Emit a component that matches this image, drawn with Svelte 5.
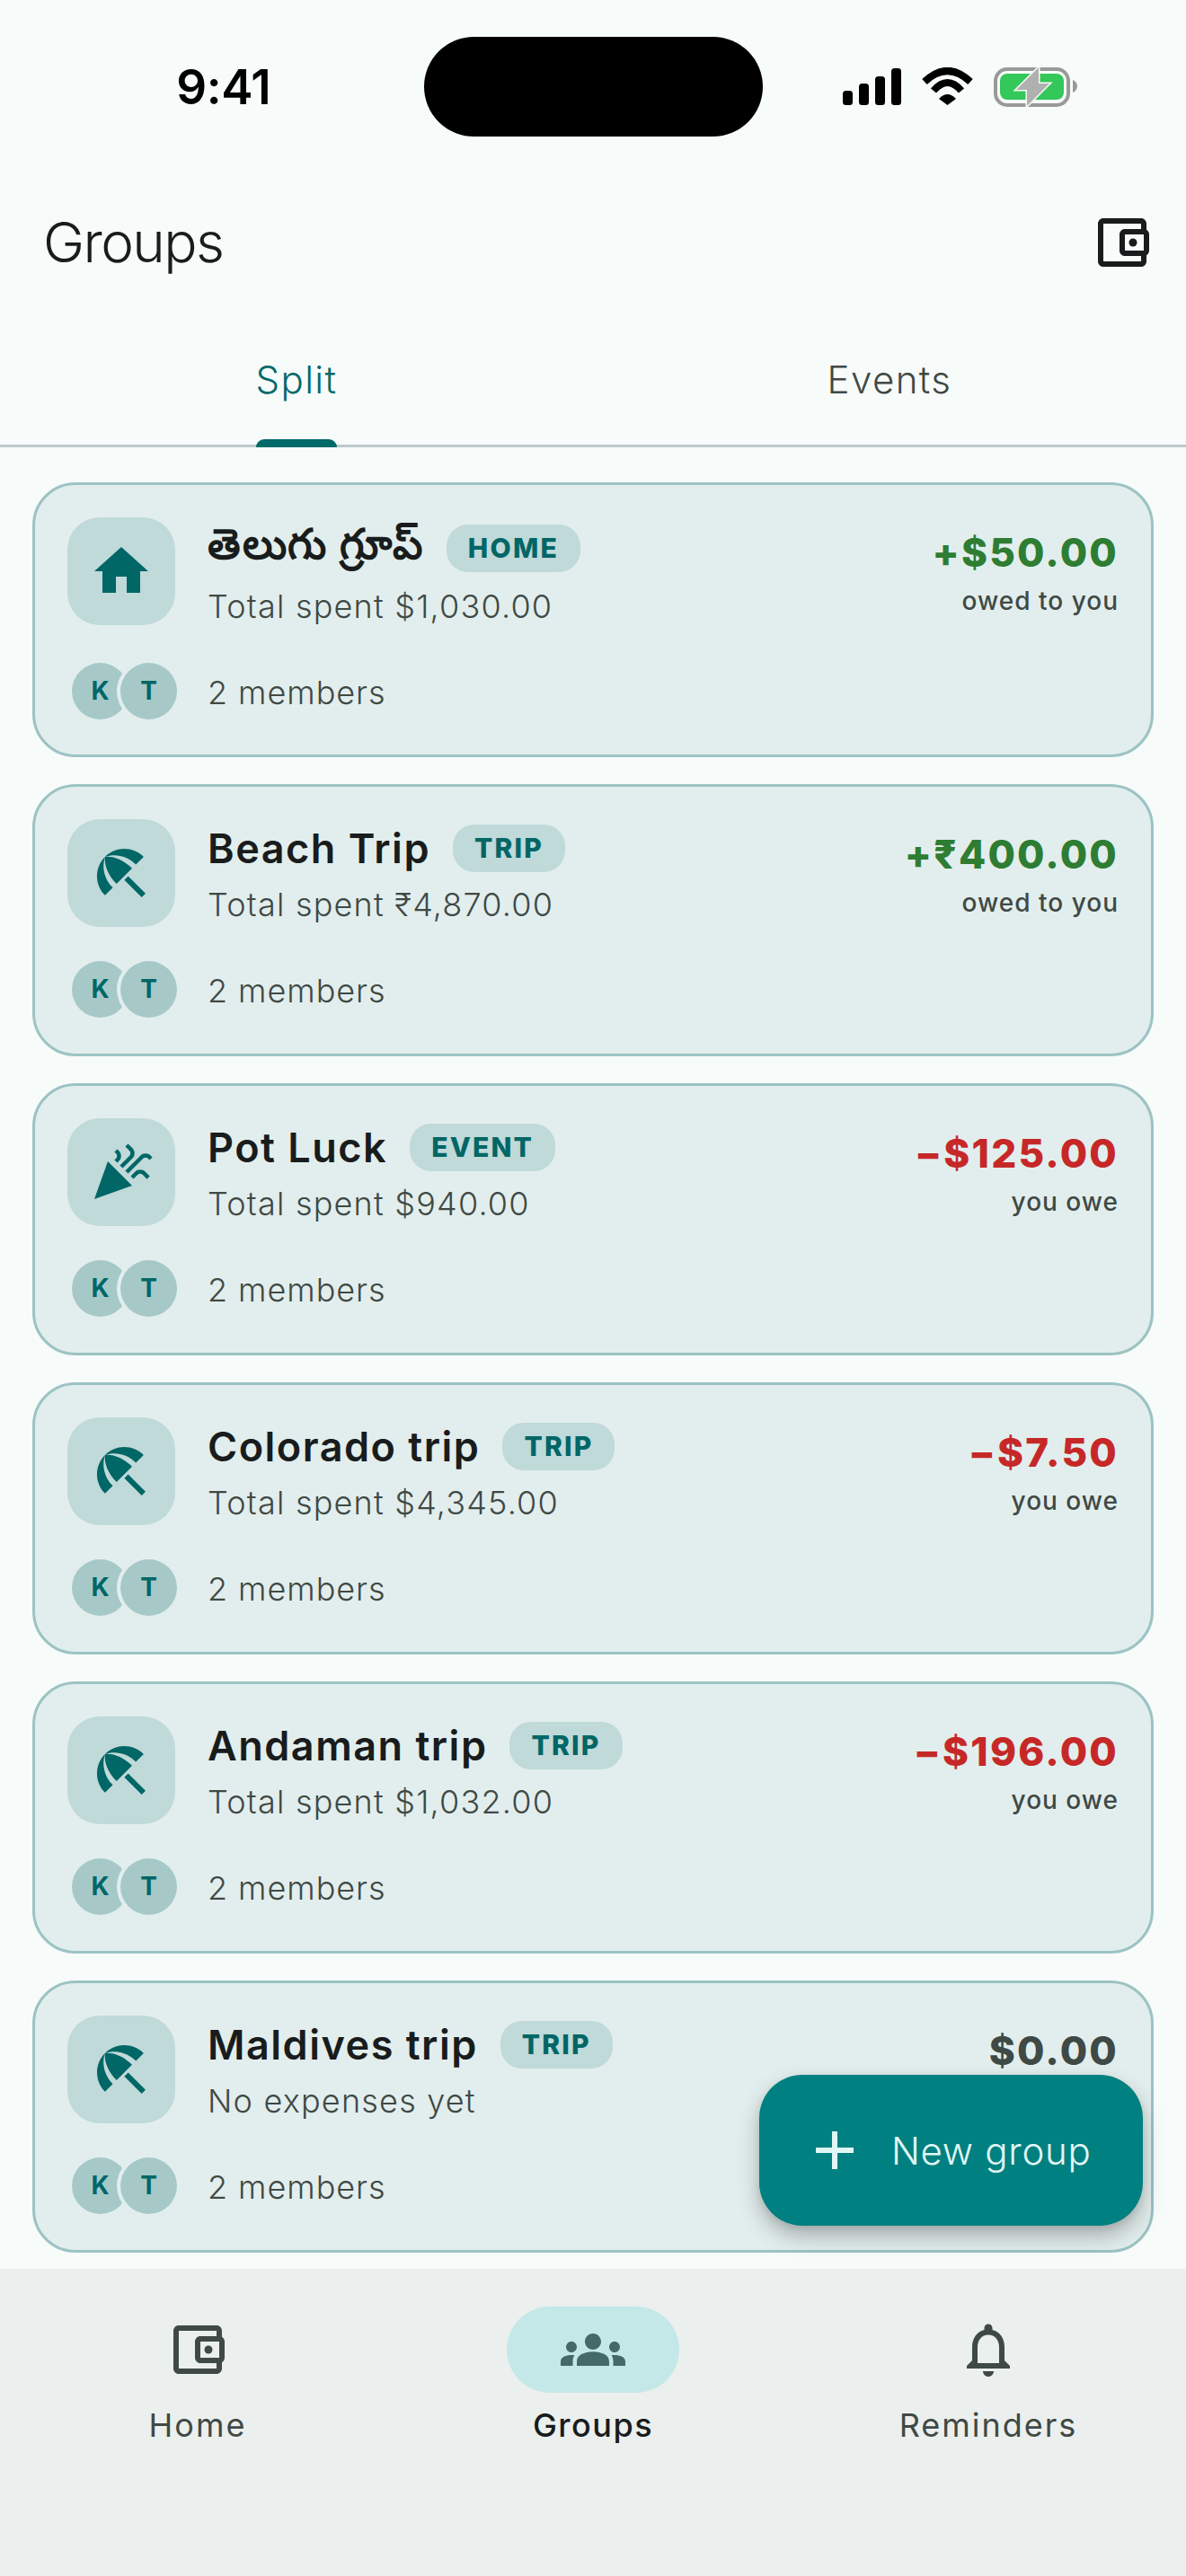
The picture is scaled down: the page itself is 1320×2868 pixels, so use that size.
<script>
	const groups = [
		{ name: 'తెలుగు గ్రూప్', tag: 'HOME', icon: 'home', spent: 'Total spent $1,030.00', amount: '+$50.00', note: 'owed to you', tone: 'pos', te: true },
		{ name: 'Beach Trip', tag: 'TRIP', icon: 'beach', spent: 'Total spent ₹4,870.00', amount: '+₹400.00', note: 'owed to you', tone: 'pos' },
		{ name: 'Pot Luck', tag: 'EVENT', icon: 'party', spent: 'Total spent $940.00', amount: '−$125.00', note: 'you owe', tone: 'neg' },
		{ name: 'Colorado trip', tag: 'TRIP', icon: 'beach', spent: 'Total spent $4,345.00', amount: '−$7.50', note: 'you owe', tone: 'neg' },
		{ name: 'Andaman trip', tag: 'TRIP', icon: 'beach', spent: 'Total spent $1,032.00', amount: '−$196.00', note: 'you owe', tone: 'neg' },
		{ name: 'Maldives trip', tag: 'TRIP', icon: 'beach', spent: 'No expenses yet', amount: '$0.00', note: '', tone: 'zero' }
	];

	const icons = {
		home: 'M10 20v-6h4v6h5v-8h3L12 3 2 12h3v8z',
		beach: 'M13.127 14.56l1.43-1.43 6.44 6.443L19.57 21zm4.293-5.73l2.86-2.86c-3.95-3.95-10.35-3.96-14.3-.02 3.93-1.3 8.31-.25 11.44 2.88zM5.95 5.98c-3.94 3.95-3.93 10.35.02 14.3l2.86-2.86C5.7 14.29 4.65 9.91 5.95 5.98zm.02-.02l-.01.01c-.38 3.01 1.17 6.88 4.3 10.02l5.73-5.73c-3.13-3.13-7.01-4.68-10.02-4.3z',
		party: 'M2 22l14-5-9-9zM14.53 12.53l5.59-5.59c.49-.49 1.28-.49 1.77 0l.59.59 1.06-1.06-.59-.59c-1.07-1.07-2.82-1.07-3.89 0l-5.59 5.59 1.06 1.06zM10.06 6.88l-.59.59 1.06 1.06.59-.59c1.07-1.07 1.07-2.82 0-3.89l-.59-.59-1.06 1.07.59.59c.48.48.48 1.28 0 1.76zM17.06 11.88l-1.59 1.59 1.06 1.06 1.59-1.59c.49-.49 1.28-.49 1.77 0l1.61 1.61 1.06-1.06-1.61-1.61c-1.08-1.07-2.82-1.07-3.89 0zM15.06 5.88l-3.59 3.59 1.06 1.06 3.59-3.59c1.07-1.07 1.07-2.82 0-3.89l-1.59-1.59-1.06 1.06 1.59 1.59c.48.49.48 1.29 0 1.77z'
	};

	const wallet = 'M21 7.28V5c0-1.1-.9-2-2-2H5c-1.11 0-2 .9-2 2v14c0 1.1.89 2 2 2h14c1.1 0 2-.9 2-2v-2.28c.59-.35 1-.98 1-1.72V9c0-.74-.41-1.37-1-1.72zM20 9v6h-7V9h7zM5 19V5h14v2h-6c-1.1 0-2 .9-2 2v6c0 1.1.9 2 2 2h6v2H5z';
	const people = 'M12 12.75c1.63 0 3.07.39 4.24.9 1.08.48 1.76 1.56 1.76 2.73V18H6v-1.61c0-1.18.68-2.26 1.76-2.73 1.17-.52 2.61-.91 4.24-.91zM4 13c1.1 0 2-.9 2-2s-.9-2-2-2-2 .9-2 2 .9 2 2 2zm1.13 1.1c-.37-.06-.74-.1-1.13-.1-.99 0-1.93.21-2.78.58C.48 14.9 0 15.62 0 16.43V18h4.5v-1.61c0-.83.23-1.61.63-2.29zM20 13c1.1 0 2-.9 2-2s-.9-2-2-2-2 .9-2 2 .9 2 2 2zm4 3.43c0-.81-.48-1.53-1.22-1.85-.85-.37-1.79-.58-2.78-.58-.39 0-.76.04-1.13.1.4.68.63 1.46.63 2.29V18H24v-1.57zM12 6c1.66 0 3 1.34 3 3s-1.34 3-3 3-3-1.34-3-3 1.34-3 3-3z';
	const bell = 'M12 22c1.1 0 2-.9 2-2h-4c0 1.1.9 2 2 2zm6-6v-5c0-3.07-1.63-5.64-4.5-6.32V4c0-.83-.67-1.5-1.5-1.5s-1.5.67-1.5 1.5v.68C7.64 5.36 6 7.92 6 11v5l-2 2v1h16v-1l-2-2zm-2 1H8v-6c0-2.48 1.51-4.5 4-4.5s4 2.02 4 4.5v6z';
</script>

<div class="screen">
	<div class="status">
		<span class="time">9:41</span>
		<div class="island"></div>
		<svg class="status-icons" width="262" height="44" viewBox="0 0 262 44">
			<rect x="0" y="26" width="11" height="16" rx="3.5" />
			<rect x="18" y="18" width="11" height="24" rx="3.5" />
			<rect x="36" y="10" width="11" height="32" rx="3.5" />
			<rect x="54" y="1" width="11" height="41" rx="3.5" />
			<path d="M91 16Q116.5 -8 142 16" fill="none" stroke="#000" stroke-width="8" />
			<path d="M101 26Q116.5 8 132 26" fill="none" stroke="#000" stroke-width="8" />
			<path d="M107 35Q116.5 25 126 35L116.5 42z" />
			<rect x="170" y="2" width="81" height="40" rx="13" fill="none" stroke="#999" stroke-width="4" />
			<rect x="175" y="7" width="71" height="29" rx="8" fill="#34c759" />
			<path d="M256 14c3 1 5 4 5 7s-2 6-5 7z" fill="#999" />
			<path d="M218 0L193 25H205V43L230 18H218z" fill="#b0b0b0" stroke="#f7fbfa" stroke-width="3" paint-order="stroke" />
		</svg>
	</div>

	<header class="top">
		<h1>Groups</h1>
		<svg class="icon" viewBox="0 0 24 24" fill="#191c1c">
			<path d={wallet} />
			<circle cx="16" cy="12" r="1.5" />
		</svg>
	</header>

	<div class="tabs">
		<div class="tab active">
			<span class="tab-label">Split<i class="indicator"></i></span>
		</div>
		<div class="tab"><span class="tab-label">Events</span></div>
	</div>

	<div class="list">
		{#each groups as g}
			<article class="card" class:te={g.te}>
				<div class="row">
					<div class="tile">
						<svg class="icon" viewBox="0 0 24 24" fill="#006666"><path d={icons[g.icon]} /></svg>
					</div>
					<div class="info">
						<div class="title-line">
							<span class="name">{g.name}</span>
							<span class="chip">{g.tag}</span>
						</div>
						<div class="spent">{g.spent}</div>
					</div>
					<div class="money">
						<div class="amount {g.tone}">{g.amount}</div>
						{#if g.note}<div class="note">{g.note}</div>{/if}
					</div>
				</div>
				<div class="members">
					<div class="avatars">
						<span class="avatar">K</span>
						<span class="avatar second">T</span>
					</div>
					<span class="count">2 members</span>
				</div>
			</article>
		{/each}
	</div>

	<button class="fab">
		<svg class="icon" viewBox="0 0 24 24" fill="#e0f7f6"><path d="M19 13h-6v6h-2v-6H5v-2h6V5h2v6h6v2z" /></svg>
		<span>New group</span>
	</button>

	<nav class="bottom">
		<div class="nav-item">
			<div class="nav-icon">
				<svg class="icon" viewBox="0 0 24 24" fill="#3f4945"><path d={wallet} /><circle cx="16" cy="12" r="1.5" /></svg>
			</div>
			<span class="nav-label">Home</span>
		</div>
		<div class="nav-item on">
			<div class="nav-icon">
				<svg class="icon" viewBox="0 0 24 24" fill="#446969"><path d={people} /></svg>
			</div>
			<span class="nav-label">Groups</span>
		</div>
		<div class="nav-item">
			<div class="nav-icon">
				<svg class="icon" viewBox="0 0 24 24" fill="#3f4945"><path d={bell} /></svg>
			</div>
			<span class="nav-label">Reminders</span>
		</div>
	</nav>
</div>

<style>
	:global(body) {
		background: #f7fbfa;
	}

	.screen {
		position: relative;
		width: 1320px;
		height: 2868px;
		overflow: hidden;
		display: flex;
		flex-direction: column;
		background: #f7fbfa;
		font-family: Inter, "Noto Sans", sans-serif;
		color: #191c1c;
	}

	.status {
		display: grid;
		grid-template-columns: 1fr auto 1fr;
		align-items: center;
		padding-top: 41px;
	}

	.time {
		justify-self: center;
		margin-left: 26px;
		font-size: 53px;
		font-weight: 600;
		letter-spacing: -0.5px;
		color: #000;
	}

	.island {
		width: 377px;
		height: 111px;
		border-radius: 56px;
		background: #000;
	}

	.status-icons {
		margin-left: 89px;
	}

	.top {
		display: flex;
		align-items: center;
		justify-content: space-between;
		padding: 82px 35px 0 48px;
	}

	.icon {
		display: block;
		width: 72px;
		height: 72px;
	}

	h1 {
		margin: 0;
		font-size: 62px;
		font-weight: 350;
		line-height: 72px;
		letter-spacing: -1.6px;
	}

	.tabs {
		display: flex;
		height: 144px;
		margin-top: 45px;
		border-bottom: 3px solid #bec9c8;
	}

	.tab {
		flex: 1;
		display: flex;
		justify-content: center;
		align-items: center;
		color: #3f4945;
		font-size: 42px;
		letter-spacing: 1.4px;
		font-weight: 350;
	}

	.tab.active {
		color: #006a6a;
	}

	.tab-label {
		position: relative;
		display: block;
		line-height: 60px;
	}

	.indicator {
		position: absolute;
		left: 0;
		right: 0;
		top: 96px;
		height: 9px;
		border-radius: 9px 9px 0 0;
		background: #006a6a;
	}

	.list {
		display: flex;
		flex-direction: column;
		gap: 30px;
		padding: 39px 36px 0;
	}

	.card {
		display: flex;
		flex-direction: column;
		gap: 36px;
		padding: 36px 36px 39px;
		border: 3px solid #9cc3c3;
		border-radius: 48px;
		background: #e2eeed;
	}

	.card.te {
		padding-bottom: 38px;
	}

	.row {
		display: flex;
		align-items: flex-start;
	}

	.tile {
		flex: none;
		display: flex;
		align-items: center;
		justify-content: center;
		width: 120px;
		height: 120px;
		border-radius: 36px;
		background: #c0d9d9;
	}

	.info {
		flex: 1;
		margin-left: 36px;
		padding-top: 2px;
	}

	.title-line {
		display: flex;
		align-items: center;
		gap: 25px;
		height: 60px;
	}

	.te .title-line {
		height: 64px;
	}

	.name {
		font-size: 45px;
		font-weight: 600;
		letter-spacing: 1.5px;
	}

	.te .name {
		font-size: 47px;
	}

	.chip {
		padding: 0 24px;
		height: 53px;
		line-height: 53px;
		border-radius: 24px;
		background: #c0d9d9;
		color: #006666;
		font-size: 30px;
		font-weight: 800;
		letter-spacing: 2.2px;
	}

	.spent {
		margin-top: 8px;
		font-size: 36px;
		line-height: 50px;
		letter-spacing: 1.2px;
		font-weight: 350;
		color: #3f4945;
	}

	.money {
		flex: none;
		padding-top: 12px;
		text-align: right;
	}

	.amount {
		font-size: 44px;
		font-weight: 800;
		line-height: 54px;
		letter-spacing: 2.2px;
	}

	.pos {
		color: #2e7d32;
	}

	.neg {
		color: #c62828;
	}

	.zero {
		color: #3f4945;
	}

	.note {
		margin-top: 6px;
		font-size: 28px;
		font-weight: 500;
		line-height: 42px;
		letter-spacing: 1px;
		color: #3f4945;
	}

	.members {
		display: flex;
		align-items: center;
		height: 66px;
	}

	.avatars {
		display: flex;
		width: 156px;
		padding-left: 5px;
		box-sizing: border-box;
	}

	.avatar {
		display: flex;
		align-items: center;
		justify-content: center;
		box-sizing: border-box;
		width: 63px;
		height: 63px;
		border-radius: 50%;
		background: #a6c9c8;
		color: #006666;
		font-size: 28px;
		font-weight: 700;
	}

	.second {
		margin-left: -9px;
		box-shadow: 0 0 0 4px #e2eeed;
	}

	.count {
		padding-top: 4px;
		font-size: 36px;
		letter-spacing: 0.95px;
		font-weight: 350;
		color: #3f4945;
	}

	.fab {
		position: absolute;
		right: 48px;
		top: 2310px;
		display: flex;
		align-items: center;
		gap: 27px;
		box-sizing: border-box;
		width: 427px;
		height: 168px;
		padding: 0 0 0 48px;
		border: 0;
		border-radius: 48px;
		background: #008080;
		color: #e0f7f6;
		font-family: inherit;
		font-size: 42px;
		font-weight: 350;
		letter-spacing: 0.7px;
		box-shadow: 0 12px 24px rgba(0, 0, 0, 0.26), 0 3px 9px rgba(0, 0, 0, 0.08);
	}

	.bottom {
		position: absolute;
		left: 0;
		right: 0;
		bottom: 0;
		display: flex;
		height: 342px;
		padding-top: 42px;
		box-sizing: border-box;
		background: #ebefee;
	}

	.nav-item {
		flex: 1;
		display: flex;
		flex-direction: column;
		align-items: center;
	}

	.nav-icon {
		display: flex;
		align-items: center;
		justify-content: center;
		width: 192px;
		height: 96px;
		border-radius: 48px;
	}

	.on .nav-icon {
		background: #c3e8e7;
	}

	.nav-label {
		margin-top: 12px;
		font-size: 36px;
		font-weight: 400;
		line-height: 48px;
		letter-spacing: 2px;
		color: #3f4945;
	}

	.on .nav-label {
		color: #191c1c;
		font-weight: 500;
		letter-spacing: 1.5px;
	}
</style>
